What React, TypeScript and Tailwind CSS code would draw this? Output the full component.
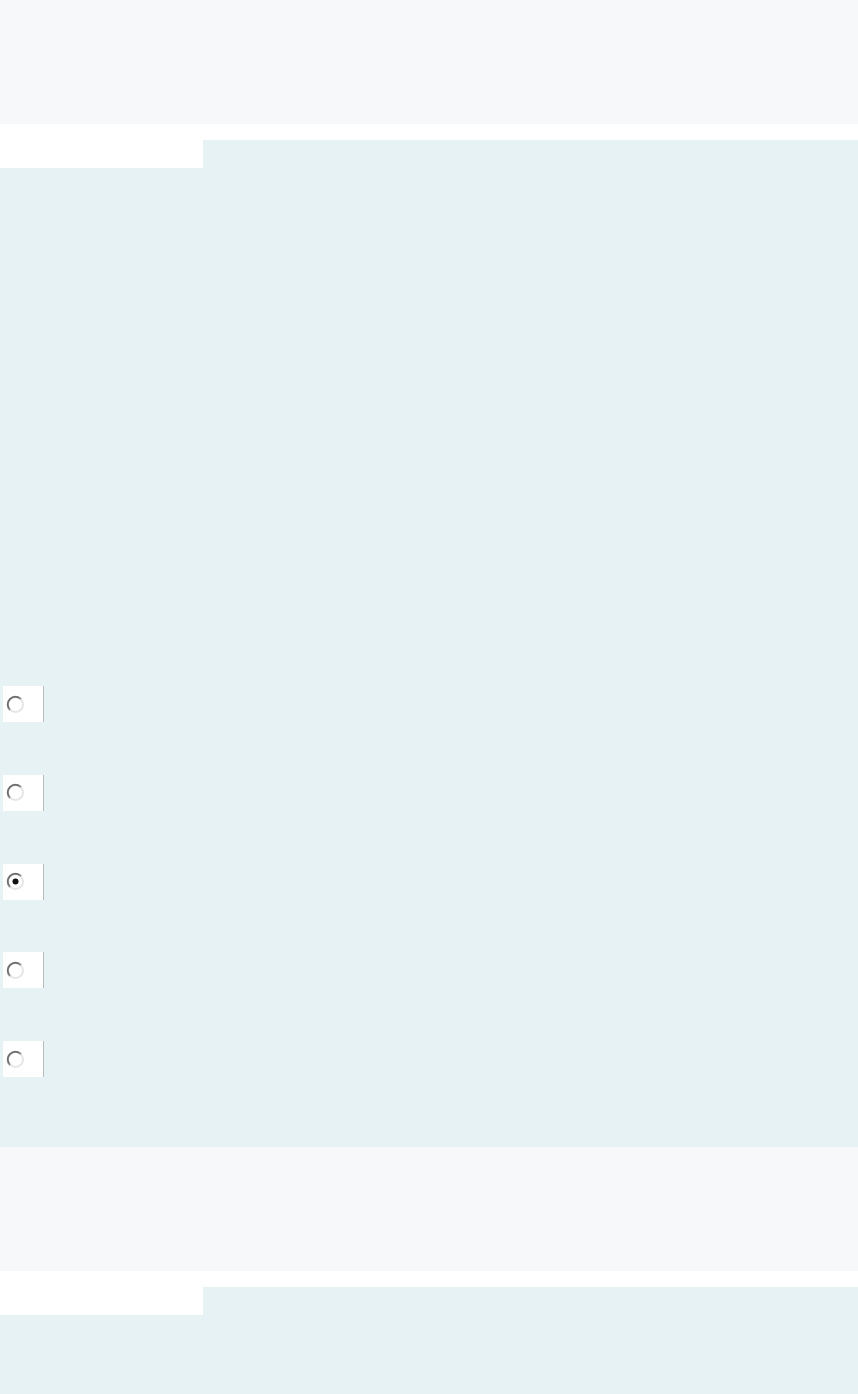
const Radio = ({ checked }: { checked?: boolean }) => (
  <div className="flex h-9 w-[41px] items-center border-r border-[#b9bcbe] bg-white pl-[3px]">
    <svg width="19" height="19" viewBox="0 0 19 19">
      <circle cx="9.5" cy="9.5" r="7.5" fill="#fff" stroke="#e6e6e6" strokeWidth="2" />
      <path d="M15 4 A7.5 7.5 0 0 0 4 15" fill="none" stroke="#8c8c8c" strokeWidth="2" />
      <path d="M13 2.8 A7.5 7.5 0 0 0 2.8 13" fill="none" stroke="#696969" strokeWidth="1.2" />
      {checked && <circle cx="9.5" cy="9.5" r="3" fill="#111" />}
    </svg>
  </div>
);

const Section = ({ children, bodyClass }: { children?: React.ReactNode; bodyClass: string }) => (
  <section className="flex flex-col">
    <div className="h-[124px] w-full bg-[#f7f8fa]" />
    <div className="h-4 bg-white" />
    <div className="flex h-7">
      <div className="w-[203px] bg-white" />
      <div className="flex-1 bg-[#e7f2f4]" />
    </div>
    <div className={`flex w-full bg-[#e7f2f4] ${bodyClass}`}>{children}</div>
  </section>
);

export default function App() {
  return (
    <div className="min-h-[1394px] w-full bg-white font-['Liberation_Sans',sans-serif]">
      <Section bodyClass="h-[979px] flex-col pl-[3px] pt-[518px]">
        <div className="flex flex-col gap-[52.75px]">
          <Radio />
          <Radio />
          <Radio checked />
          <Radio />
          <Radio />
        </div>
      </Section>
      <Section bodyClass="h-[79px]" />
    </div>
  );
}
